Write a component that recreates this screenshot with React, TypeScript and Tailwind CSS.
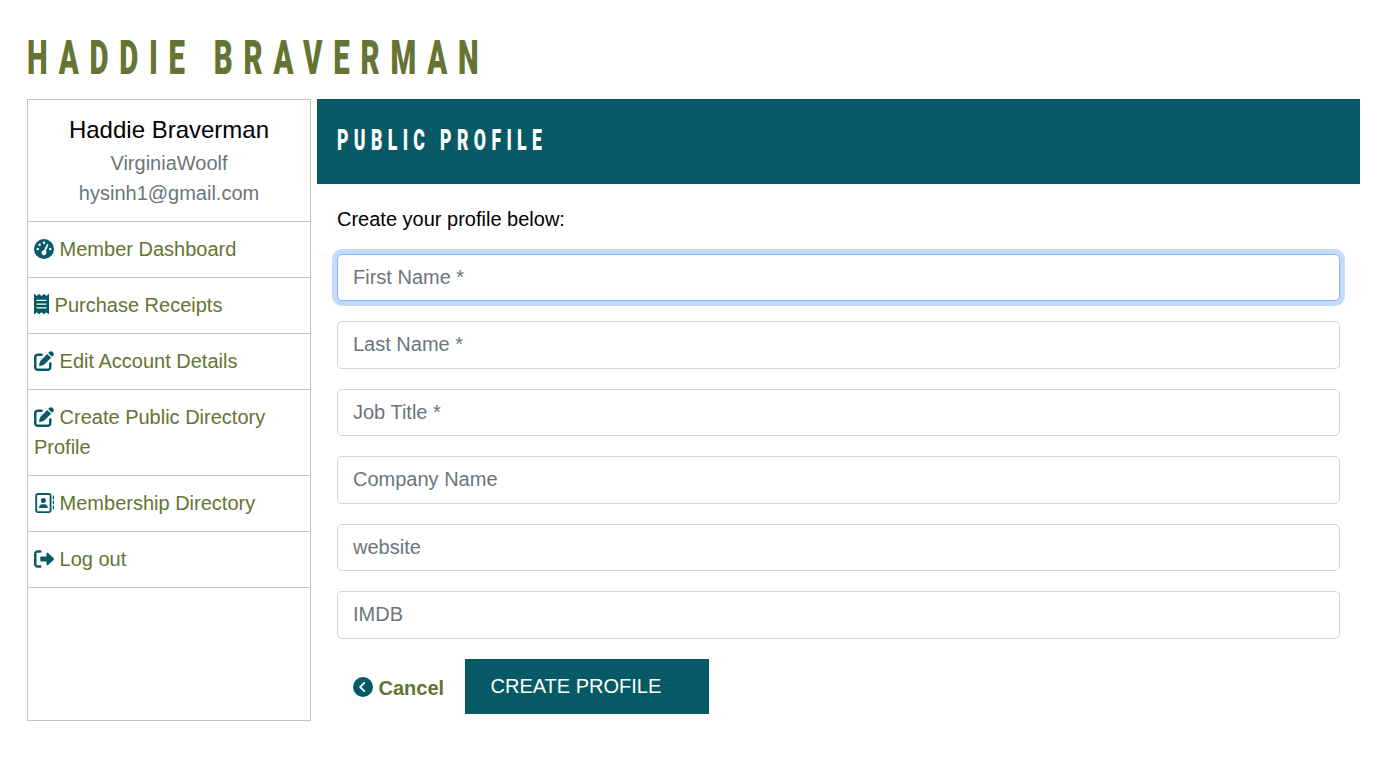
import type { ReactNode } from "react";
import { FaReceipt } from "react-icons/fa";
import {
  FaGaugeHigh,
  FaPenToSquare,
  FaRegAddressBook,
  FaCircleChevronLeft,
} from "react-icons/fa6";

const iconClass = "inline-block h-5 w-5 align-[-2.5px] text-[#065a65]";

function LogOutIcon() {
  return (
    <svg viewBox="0 0 512 512" fill="currentColor" className={iconClass}>
      <path d="M96 480h64C177.7 480 192 465.7 192 448S177.7 416 160 416H96c-17.67 0-32-14.33-32-32V128c0-17.67 14.33-32 32-32h64C177.7 96 192 81.67 192 64S177.7 32 160 32H96C42.98 32 0 74.98 0 128v256C0 437 42.98 480 96 480zM504.8 238.5l-144.1-136c-6.975-6.578-17.2-8.375-26-4.594c-8.803 3.797-14.51 12.47-14.51 22.05l-.0918 72l-128-.001c-17.69 0-32.02 14.33-32.02 32v64c0 17.67 14.34 32 32.02 32l128 .001l.0918 71.1c0 9.578 5.707 18.25 14.51 22.05c8.803 3.781 19.03 1.984 26-4.594l144.1-136C514.4 264.4 514.4 247.6 504.8 238.5z" />
    </svg>
  );
}

const links: { label: string; icon: ReactNode }[] = [
  { label: "Member Dashboard", icon: <FaGaugeHigh className={iconClass} /> },
  {
    label: "Purchase Receipts",
    icon: <FaReceipt className="inline-block h-5 w-[15px] align-[-2px] text-[#065a65]" />,
  },
  { label: "Edit Account Details", icon: <FaPenToSquare className={iconClass} /> },
  { label: "Create Public Directory Profile", icon: <FaPenToSquare className={iconClass} /> },
  { label: "Membership Directory", icon: <FaRegAddressBook className={iconClass} /> },
  { label: "Log out", icon: <LogOutIcon /> },
];

const fields = ["First Name *", "Last Name *", "Job Title *", "Company Name", "website", "IMDB"];

function Field({ label, focused }: { label: string; focused: boolean }) {
  return (
    <input
      placeholder={label}
      className={
        "block h-[47.5px] w-full rounded-[5px] border bg-white px-[15px] pb-[1px] text-[20px] leading-[30px] outline-none placeholder:text-[#6c757d] " +
        (focused ? "border-[#86b7fe] shadow-[0_0_0_5px_rgba(13,110,253,0.25)]" : "border-[#ced4da]")
      }
    />
  );
}

export default function App() {
  return (
    <div className="min-h-[762px] bg-white pl-[27px] pr-[29px] pt-[27px] font-['Liberation_Sans',Arial,sans-serif] text-[20px] leading-[30px] text-black">
      <h1 className="h-[72px] origin-left scale-x-[0.6] whitespace-nowrap pt-px font-['Roboto',sans-serif] text-[49px] font-black leading-[60px] tracking-[17.9px] text-[#657432]">
        HADDIE BRAVERMAN
      </h1>
      <div className="flex gap-[6px]">
        <aside className="h-[622px] w-[284px] shrink-0 border border-[#c4c4c4]">
          <div className="h-[122px] border-b border-[#c4c4c4] pt-3 text-center text-[#6c757d]">
            <div className="text-[24px] leading-[36px] text-black">Haddie Braverman</div>
            <div>VirginiaWoolf</div>
            <div>hysinh1@gmail.com</div>
          </div>
          <nav>
            {links.map((l) => (
              <a
                key={l.label}
                className="block border-b border-[#c4c4c4] px-[6px] pb-[13px] pt-3 text-[#657432]"
              >
                {l.icon} {l.label}
              </a>
            ))}
          </nav>
        </aside>
        <main className="min-w-0 flex-1">
          <div className="h-[85px] overflow-hidden bg-[#065a65] px-5 pt-[22px]">
            <h2 className="origin-left scale-x-[0.6] whitespace-nowrap font-['Roboto',sans-serif] text-[29.5px] font-black leading-[38px] tracking-[8.9px] text-white">
              PUBLIC PROFILE
            </h2>
          </div>
          <div className="px-5 pt-5">
            <p className="mb-[19.9px]">Create your profile below:</p>
            <form className="flex flex-col gap-5">
              {fields.map((f, i) => (
                <Field key={f} label={f} focused={i === 0} />
              ))}
              <div className="flex">
                <a className="w-32 pl-4 pt-[14px] font-bold text-[#657432]">
                  <FaCircleChevronLeft className={iconClass} /> Cancel
                </a>
                <button
                  type="button"
                  className="h-[55px] w-[244px] bg-[#065a65] pb-[1px] pl-[25.5px] text-left text-white"
                >
                  CREATE PROFILE
                </button>
              </div>
            </form>
          </div>
        </main>
      </div>
    </div>
  );
}
